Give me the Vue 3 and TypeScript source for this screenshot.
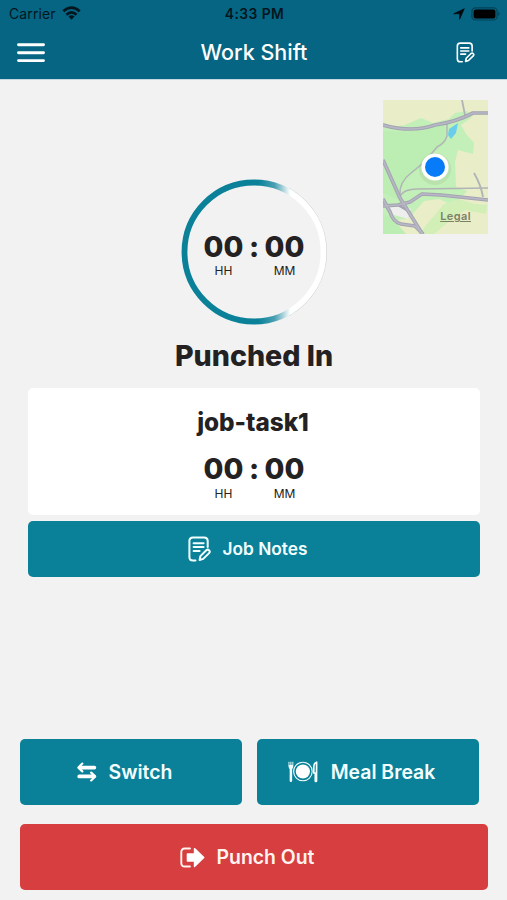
<script setup lang="ts">
import { ref } from 'vue'

interface Timer {
  hours: string
  minutes: string
}

const shift = ref<Timer>({ hours: '00', minutes: '00' })
const task = ref<Timer>({ hours: '00', minutes: '00' })
const taskName = ref('job-task1')
</script>

<template>
  <div class="screen">
    <header class="header">
      <div class="status">
        <div class="status-left">
          <span class="carrier">Carrier</span>
          <svg class="wifi" width="19" height="14" viewBox="0 0 18 14">
            <g fill="none" stroke="#03161d" stroke-width="2.7">
              <path d="M.8 5.3Q9-2.2 17.2 5.3" />
              <path d="M4 8.8Q9 4 14 8.8" />
            </g>
            <path d="M6 10.6Q9 8 12 10.6L9 13.7Z" fill="#03161d" />
          </svg>
        </div>
        <span class="clock">4:33 PM</span>
        <div class="status-right">
          <svg width="12" height="12" viewBox="0 0 12 12">
            <path d="M11.3.7L6.6 11.3V5.8H.6Z" fill="#02090c" stroke="#02090c" stroke-width=".6" stroke-linejoin="round" />
          </svg>
          <svg width="30" height="14" viewBox="0 0 30 14">
            <rect x=".9" y=".8" width="25.2" height="12.2" rx="3.6" fill="none" stroke="#044258" stroke-width="1.2" />
            <rect x="2.6" y="2.4" width="21.8" height="9" rx="2" fill="#000" />
            <path d="M27.3 4.7Q30 6.9 27.3 9.1Z" fill="#044258" />
          </svg>
        </div>
      </div>
      <nav class="nav">
        <button class="nav-btn" aria-label="Menu">
          <svg width="28" height="20" viewBox="0 0 28 20">
            <path d="M1.5 1.8h25M1.5 9.7h25M1.5 17.6h25" stroke="#fff" stroke-width="2.9" stroke-linecap="round" />
          </svg>
        </button>
        <h1 class="title">Work Shift</h1>
        <button class="nav-btn nav-right" aria-label="Notes">
          <svg width="19" height="21" viewBox="0 0 23 26">
            <g fill="none" stroke="#fff" stroke-width="2" stroke-linecap="round" stroke-linejoin="round">
              <path d="M7.5 24.5H5Q1.4 24.5 1.4 21V5Q1.4 1.4 5 1.4H16Q19.7 1.4 19.7 5V11" />
              <path d="M5.6 7.3H15.6M5.6 11.1H15.6M5.6 15H11.6" />
              <path d="M11.6 24L12.4 20.1L18.3 14.2Q20 13 21.2 14.5Q22.4 15.8 21.1 17.1L15.2 22.9Z" />
            </g>
          </svg>
        </button>
      </nav>
    </header>

    <main class="content">
      <section class="overview">
        <div class="ring">
          <svg class="ring-art" width="148" height="148" viewBox="0 0 148 148">
            <defs>
              <linearGradient id="ringFade" gradientUnits="userSpaceOnUse" x1="0" y1="0" x2="148" y2="0">
                <stop offset="0" stop-color="#0a8198" />
                <stop offset=".53" stop-color="#0a8198" />
                <stop offset=".64" stop-color="#4aa0b2" />
                <stop offset=".745" stop-color="#fff" />
                <stop offset="1" stop-color="#fff" />
              </linearGradient>
            </defs>
            <path d="M109 10.3A72.8 72.8 0 0 1 109 137.7" fill="none" stroke="#cfd1d2" stroke-width="1" />
            <circle cx="74" cy="74" r="69.5" fill="none" stroke="url(#ringFade)" stroke-width="5.8" />
          </svg>
          <div class="timer">
            <div class="unit"><b>{{ shift.hours }}</b><span>HH</span></div>
            <b class="colon">:</b>
            <div class="unit"><b>{{ shift.minutes }}</b><span>MM</span></div>
          </div>
        </div>

        <div class="map">
          <svg width="105" height="134" viewBox="0 0 105 134">
            <rect width="105" height="134" fill="#e9edc8" />
            <path d="M0 22L10 27L22 25L38 18L50 23L66 19L72 13L84 11L89 17L78 25L83 34L91 43L90 54L75 50L72 62L73 87L84 91L75 101L65 103L56 99L41 101L26 118L0 123Z" fill="#c3efb8" />
            <path d="M0 31Q33 34 62 24L63 42L50 53L38 67L20 80L14 99L0 93Z" fill="#bcedb3" />
            <path d="M61 104L75 99L92 104L104 105L103 114L82 110L64 123L51 134H36L45 123Z" fill="#d1efb7" />
            <path d="M0 114L9 118L23 134H0Z" fill="#bceeb4" />
            <path d="M4 107L17 104L28 109L25 119L11 115Z" fill="#eeeeec" />
            <path d="M66 29L75 23L73 33L68 39L65 35Z" fill="#6bcdec" />
            <g fill="none" stroke-linejoin="round">
              <g stroke="#b0b4b6" stroke-width="1.8">
                <path d="M79 0L82 15M91 73Q98 85 100 97" />
                <path d="M64 24V36Q62 43 54 47L49 53L39 64L28 73Q16 82 17 95" stroke-width="1.4" />
                <path d="M17 96Q21 89 34 89L105 88" stroke-width="1.4" />
              </g>
              <g stroke="#a4a3b2" stroke-width="3.7">
                <path d="M0 25Q29 33 52 25Q73 22 90 13L105 13" />
                <path d="M0 60L17 98L40 135" />
                <path d="M0 106L15 105L27 102L39 94L58 95L77 97L105 100" />
                <path d="M0 99L7 112Q10 122 18 124L32 126L40 134" />
                <path d="M15 105L27 112" stroke-width="2.5" />
              </g>
              <g stroke="#b7b7c5" stroke-width="1.7">
                <path d="M0 25Q29 33 52 25Q73 22 90 13L105 13" />
                <path d="M0 60L17 98L40 135" />
                <path d="M0 106L15 105L27 102L39 94L58 95L77 97L105 100" />
                <path d="M0 99L7 112Q10 122 18 124L32 126L40 134" />
              </g>
            </g>
            <circle cx="52" cy="69" r="16" fill="#718060" opacity=".12" />
            <circle cx="52" cy="67" r="13.6" fill="#fff" />
            <circle cx="52" cy="67" r="10" fill="#087cf8" />
          </svg>
          <a class="legal">Legal</a>
        </div>
      </section>

      <h2 class="state">Punched In</h2>

      <section class="task">
        <h3 class="task-name">{{ taskName }}</h3>
        <div class="timer">
          <div class="unit"><b>{{ task.hours }}</b><span>HH</span></div>
          <b class="colon">:</b>
          <div class="unit"><b>{{ task.minutes }}</b><span>MM</span></div>
        </div>
      </section>

      <button class="btn notes">
        <svg width="23" height="26" viewBox="0 0 23 26">
          <g fill="none" stroke="#f2ffff" stroke-width="2" stroke-linecap="round" stroke-linejoin="round">
            <path d="M7.5 24.5H5Q1.4 24.5 1.4 21V5Q1.4 1.4 5 1.4H16Q19.7 1.4 19.7 5V11" />
            <path d="M5.6 7.3H15.6M5.6 11.1H15.6M5.6 15H11.6" />
            <path d="M11.6 24L12.4 20.1L18.3 14.2Q20 13 21.2 14.5Q22.4 15.8 21.1 17.1L15.2 22.9Z" />
          </g>
        </svg>
        <span>Job Notes</span>
      </button>

      <footer class="actions">
        <div class="pair">
          <button class="btn switch">
            <svg width="20" height="20" viewBox="0 0 20 20">
              <g fill="none" stroke="#fff" stroke-linecap="round" stroke-linejoin="round">
                <path d="M3 5.6H17.4M2.2 14.4H17" stroke-width="3.7" />
                <path d="M5.3 1.6L1.4 5.6L5.3 9.4M14.2 10.6L18.1 14.4L14.2 18.4" stroke-width="2.2" />
              </g>
            </svg>
            <span>Switch</span>
          </button>
          <button class="btn meal">
            <svg width="30" height="22" viewBox="0 0 30 22">
              <g fill="none" stroke="#f3ffff">
                <circle cx="14.9" cy="10.5" r="9.3" stroke-width="1.1" />
                <path d="M2.9 7.5V19.8" stroke-width="2.5" stroke-linecap="round" />
                <path d="M28.6 1.2Q25.8 2 25.8 6V12H27.3V20Q27.3 21 28.5 20Z" stroke-width="1.7" stroke-linejoin="round" />
              </g>
              <path d="M.5 .7H1.4V4H2.4V.7H3.4V4H4.4V.7H5.3V5.5Q5.3 8 2.9 8T.5 5.5Z" fill="#f3ffff" />
              <circle cx="14.9" cy="10.5" r="7.1" fill="#fff" />
            </svg>
            <span>Meal Break</span>
          </button>
        </div>
        <button class="btn punch">
          <svg width="25" height="21" viewBox="0 0 25 21">
            <path d="M10 1.5H4.8Q1.3 1.5 1.3 5V16Q1.3 19.5 4.8 19.5H10" fill="none" stroke="#fff3ef" stroke-width="1.9" stroke-linecap="round" />
            <path d="M7.4 7H14.5V1.6L23.8 10.5L14.5 19.4V14H7.4Z" fill="#fff" stroke="#fff" stroke-width="1.4" stroke-linejoin="round" />
          </svg>
          <span>Punch Out</span>
        </button>
      </footer>
    </main>
  </div>
</template>

<style>
body {
  margin: 0;
  background: #f2f2f2;
}
</style>

<style scoped>
.screen {
  width: 507px;
  height: 900px;
  display: flex;
  flex-direction: column;
  overflow: hidden;
  background: #f2f2f2;
  color: #232122;
  font-family: Inter, "Liberation Sans", sans-serif;
}
h1, h2, h3 { margin: 0; }
button {
  border: 0;
  padding: 0;
  margin: 0;
  background: none;
  color: inherit;
  font-family: inherit;
}
svg { display: block; flex: none; }
.header {
  height: 79px;
  flex: none;
  background: #056583;
  box-shadow: 0 1px 0 #c4d8df;
}
.status {
  height: 27px;
  display: grid;
  grid-template-columns: 1fr auto 1fr;
  align-items: center;
  padding: 0 6px 0 9px;
  color: #03161d;
}
.status-left, .status-right { display: flex; align-items: center; }
.status-left { gap: 6px; }
.status-right { justify-content: flex-end; gap: 6px; }
.status-left .wifi { margin-top: -2px; }
.carrier { font-size: 14px; letter-spacing: .1px; }
.clock { font-size: 13.8px; font-weight: 600; letter-spacing: .45px; margin-right: 1px; }
.nav {
  height: 52px;
  display: grid;
  grid-template-columns: 1fr auto 1fr;
  align-items: center;
  padding: 0 16px 0 17px;
}
.nav-right { justify-self: end; margin: -2px 16px 0 0; }
.title {
  font-size: 21.5px;
  line-height: 28px;
  font-weight: 500;
  color: #fff;
  margin-top: -2px;
}
.content {
  flex: 1;
  display: flex;
  flex-direction: column;
  padding: 21px 19px 10px 20px;
}
.overview {
  display: grid;
  grid-template-columns: 1fr 148px 1fr;
  height: 227px;
}
.ring {
  grid-column: 2;
  width: 148px;
  height: 148px;
  margin-top: 78px;
  display: grid;
}
.ring-art, .ring .timer { grid-area: 1 / 1; }
.ring .timer { padding-top: 54px; }
.timer {
  display: flex;
  justify-content: center;
  align-items: flex-start;
}
.unit {
  width: 40px;
  display: flex;
  flex-direction: column;
  align-items: center;
}
.unit b, .colon { font-size: 28.8px; line-height: 30px; font-weight: 800; }
.colon { width: 21px; text-align: center; }
.unit span { font-size: 12px; line-height: 14px; margin-top: 3px; }
.ring .unit span { margin-top: 2px; }
.map {
  grid-column: 3;
  justify-self: end;
  width: 105px;
  height: 134px;
  position: relative;
}
.legal {
  position: absolute;
  right: 17px;
  bottom: 11px;
  font-size: 11px;
  line-height: 14px;
  font-weight: 600;
  letter-spacing: .4px;
  color: #7c8166;
  text-decoration: underline;
}
.state {
  margin-top: 12px;
  text-align: center;
  font-size: 28.6px;
  line-height: 34px;
  font-weight: 800;
}
.task {
  margin: 15px 8px 0;
  height: 127px;
  border-radius: 5px;
  background: #fff;
  box-sizing: border-box;
  padding-top: 19px;
}
.task-name {
  margin-bottom: 17px;
  padding-right: 2px;
  text-align: center;
  font-size: 24.3px;
  line-height: 30px;
  font-weight: 800;
}
.btn {
  display: flex;
  align-items: center;
  justify-content: center;
  border-radius: 5px;
  background: #0a8199;
  color: #f3ffff;
  font-size: 19.4px;
  line-height: 24px;
  font-weight: 600;
}
.notes {
  margin: 6px 8px 0;
  height: 56px;
  gap: 12px;
  font-size: 17.3px;
  padding-right: 13px;
}
.actions { margin-top: auto; }
.pair { display: grid; grid-template-columns: 222px 222px; gap: 14.5px; }
.pair .btn, .punch { height: 66px; }
.switch { gap: 12px; padding-right: 13px; }
.meal { gap: 13px; padding-right: 12px; }
.punch {
  width: 100%;
  margin-top: 19px;
  gap: 12px;
  padding-right: 14px;
  background: #d63e3f;
  color: #fff3ef;
}
</style>
